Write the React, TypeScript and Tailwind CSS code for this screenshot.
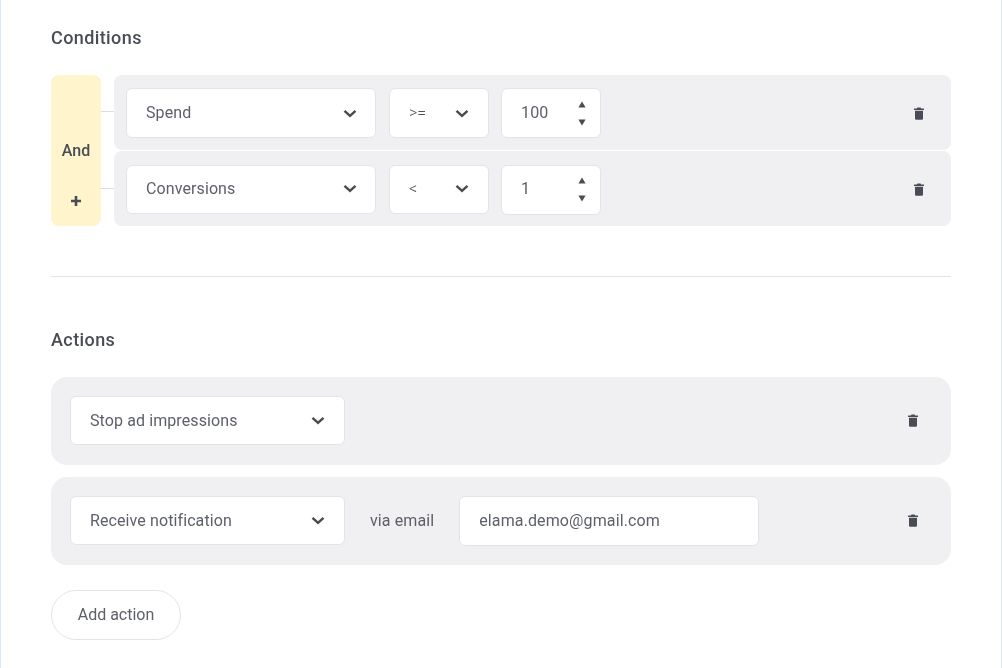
const font = "font-['Roboto',sans-serif]";

function Chevron() {
  return (
    <svg width="14" height="9" viewBox="0 0 14 9" fill="none" className="shrink-0">
      <path d="M1.5 1.8 L7 6.8 L12.5 1.8" stroke="#4a4c55" strokeWidth="2.5" />
    </svg>
  );
}

function Trash() {
  return (
    <svg width="10" height="13" viewBox="0 0 10 13" className="block shrink-0">
      <path d="M3.4 0.5h3.2l.5 1H10V3H0V1.5h2.9z" fill="#4a4c55" />
      <path d="M1 3.8h8V11.5a1.3 1.3 0 0 1-1.3 1.3H2.3A1.3 1.3 0 0 1 1 11.5z" fill="#4a4c55" />
    </svg>
  );
}

function Select({ label, w, h, small, pr }: { label: string; w: string; h: string; small?: boolean; pr: string }) {
  return (
    <div className={`${w} ${h} ${pr} shrink-0 flex items-center justify-between bg-white border border-[#e3e4e8] rounded-[6px] pl-[19px]`}>
      <span className={small ? "text-[16px] font-light text-[#4f5159]" : "text-[16px] tracking-[0.1px] text-[#5d5f69]"}>{label}</span>
      <Chevron />
    </div>
  );
}

function NumberBox({ value, h }: { value: string; h: string }) {
  return (
    <div className={`w-[100px] ${h} shrink-0 flex items-center justify-between bg-white border border-[#e3e4e8] rounded-[6px] pl-[19px] pr-[14px]`}>
      <span className="text-[16px] tracking-[0.15px] text-[#5d5f69]">{value}</span>
      <div className="flex flex-col gap-[11px]">
        <svg width="8" height="7" viewBox="0 0 8 7" className="block"><path d="M4 0.5 L7.6 6.5 H0.4 Z" fill="#4a4c55" /></svg>
        <svg width="8" height="7" viewBox="0 0 8 7" className="block"><path d="M4 6.5 L7.6 0.5 H0.4 Z" fill="#4a4c55" /></svg>
      </div>
    </div>
  );
}

function ConditionRow({ field, op, value, boxH, numH }: { field: string; op: string; value: string; boxH: string; numH: string }) {
  return (
    <div className="h-[75px] flex items-start bg-[#f0f0f2] rounded-[8px] pl-[12px] pr-[27px]">
      <div className="flex items-start gap-[13px] flex-1 min-w-0 self-start">
        <Select label={field} w="w-[250px]" h={boxH} pr="pr-[18px]" />
        <Select label={op} w="w-[100px]" h={boxH} pr="pr-[19px]" small />
        <div className="-ml-px"><NumberBox value={value} h={numH} /></div>
      </div>
      <div className="self-center mt-[2px]"><Trash /></div>
    </div>
  );
}

function ActionRow({ children }: { children: React.ReactNode }) {
  return (
    <div className="h-[88px] flex items-center justify-between bg-[#f0f0f2] rounded-[16px] pl-[19px] pr-[33px]">
      <div className="flex items-center -mt-[1px]">{children}</div>
      <div className="-mt-[2px]"><Trash /></div>
    </div>
  );
}

export default function App() {
  return (
    <div className={`${font} will-change-transform w-[1002px] h-[668px] overflow-hidden border-x border-[#dbe7fb] pl-[50px] pr-[50px] pt-[27px]`}>
      <h2 className="text-[18px] leading-[22px] font-medium tracking-[0.4px] text-[#4a4c55]">Conditions</h2>

      <div className="flex mt-[26px]">
        <div className="w-[50px] h-[151px] shrink-0 bg-[#fff4cc] rounded-[8px] flex flex-col items-center">
          <span className="mt-[66px] text-[16px] leading-[20px] font-medium text-[#4a4c55]">And</span>
          <span className="mt-[35px] h-[10px]">
            <svg width="10" height="10" viewBox="0 0 10 10" className="block"><path d="M5 0v10M0 5h10" stroke="#4a4c55" strokeWidth="2.6" /></svg>
          </span>
        </div>
        <div className="w-[13px] shrink-0 flex flex-col">
          <div className="h-px bg-[#dcdce4] mt-[36px]" />
          <div className="h-px bg-[#dcdce4] mt-[76px]" />
        </div>
        <div className="flex-1 flex flex-col gap-px">
          <ConditionRow field="Spend" op=">=" value="100" boxH="h-[50px] mt-[13px]" numH="h-[50px] mt-[13px]" />
          <ConditionRow field="Conversions" op="<" value="1" boxH="h-[49px] mt-[14px] pb-[2px]" numH="h-[50px] mt-[14px] pb-[2px]" />
        </div>
      </div>

      <div className="h-px bg-[#e3e4e8] mt-[50px]" />

      <h2 className="text-[18px] leading-[22px] font-medium tracking-[0.4px] text-[#4a4c55] mt-[52px]">Actions</h2>

      <div className="flex flex-col gap-[12px] mt-[26px]">
        <ActionRow>
          <Select label="Stop ad impressions" w="w-[275px]" h="h-[49px]" pr="pr-[19px]" />
        </ActionRow>
        <ActionRow>
          <Select label="Receive notification" w="w-[275px]" h="h-[49px]" pr="pr-[19px]" />
          <span className="ml-[25px] text-[16px] tracking-[0.1px] text-[#5d5f69]">via email</span>
          <div className="ml-[25px] w-[300px] h-[50px] flex items-center bg-white border border-[#e3e4e8] rounded-[6px] pl-[19px] text-[16px] tracking-[0.12px] text-[#5d5f69]">elama.demo@gmail.com</div>
        </ActionRow>
      </div>

      <button className="mt-[25px] w-[130px] h-[50px] rounded-full border border-[#e3e4e8] bg-white text-[16px] text-[#5d5f69]">Add action</button>
    </div>
  );
}
